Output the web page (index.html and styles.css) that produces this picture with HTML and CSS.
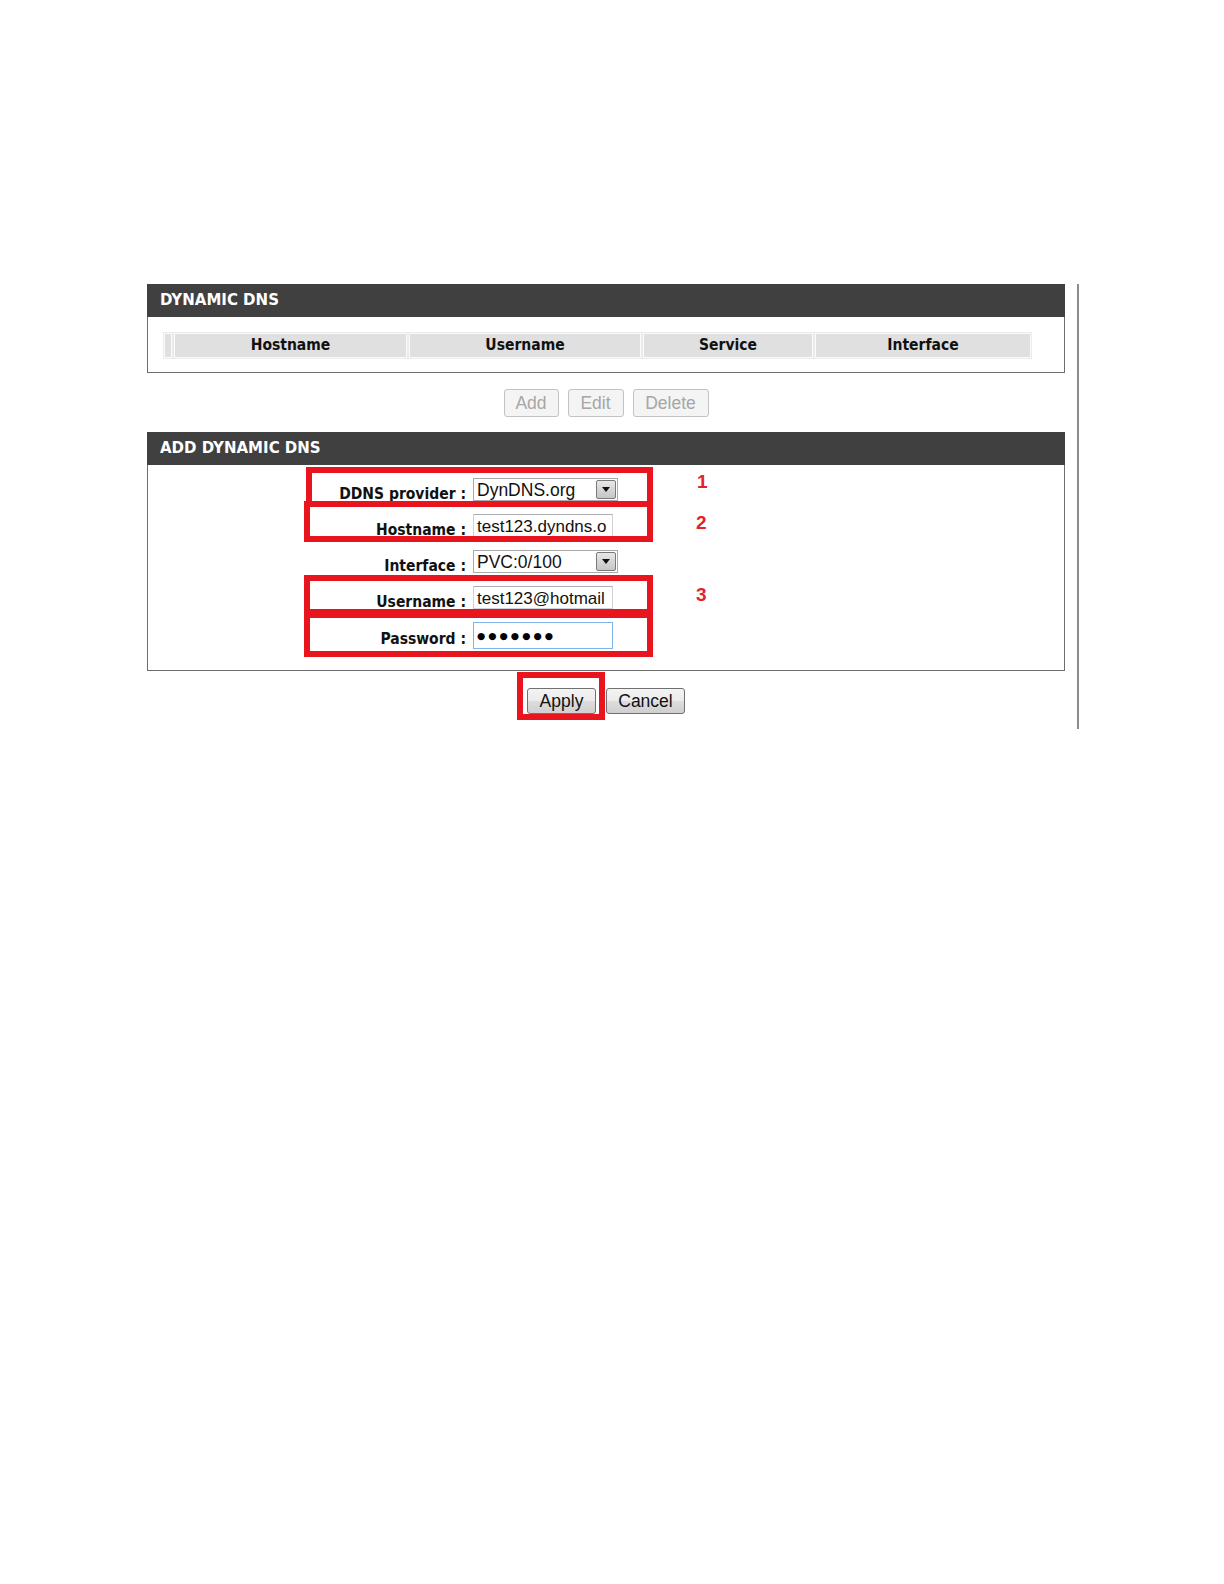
FILE: index.html
```html
<!DOCTYPE html>
<html lang="en">
<head>
<meta charset="utf-8">
<title>Dynamic DNS</title>
<link rel="stylesheet" href="styles.css">
</head>
<body>
<div class="frame">
  <section class="panel">
    <div class="panel-head">DYNAMIC DNS</div>
    <div class="list-body">
      <div class="thead">
        <div class="th th-sel"></div>
        <div class="th th-host">Hostname</div>
        <div class="th th-user">Username</div>
        <div class="th th-svc">Service</div>
        <div class="th th-if">Interface</div>
      </div>
    </div>
  </section>

  <div class="btnrow btnrow-top">
    <div class="btn disabled btn-add">Add</div>
    <div class="btn disabled btn-edit">Edit</div>
    <div class="btn disabled btn-delete">Delete</div>
  </div>

  <section class="panel panel-form">
    <div class="panel-head">ADD DYNAMIC DNS</div>
    <div class="form">
      <div class="row">
        <div class="label">DDNS provider :</div>
        <div class="select"><span class="select-text">DynDNS.org</span><span class="select-btn"><span class="tri"></span></span></div>
      </div>
      <div class="row">
        <div class="label">Hostname :</div>
        <div class="input"><span class="input-text">test123.dyndns.o</span></div>
      </div>
      <div class="row">
        <div class="label">Interface :</div>
        <div class="select"><span class="select-text">PVC:0/100</span><span class="select-btn"><span class="tri"></span></span></div>
      </div>
      <div class="row">
        <div class="label">Username :</div>
        <div class="input"><span class="input-text">test123@hotmail</span></div>
      </div>
      <div class="row row-pass">
        <div class="label">Password :</div>
        <div class="input input-focus"><span class="dots">●●●●●●●</span></div>
      </div>
    </div>
  </section>

  <div class="btnrow btnrow-bottom">
    <div class="btn btn-apply">Apply</div>
    <div class="btn btn-cancel">Cancel</div>
  </div>

  <div class="mark mark-1"></div>
  <div class="mark mark-2"></div>
  <div class="mark mark-3a"></div>
  <div class="mark mark-3b"></div>
  <div class="mark mark-apply"></div>
  <div class="num num-1">1</div>
  <div class="num num-2">2</div>
  <div class="num num-3">3</div>
</div>
</body>
</html>
```

FILE: styles.css
```css
html, body {
  margin: 0;
  padding: 0;
  background: #ffffff;
}

body {
  font-family: "Liberation Sans", Arial, sans-serif;
  color: #000;
}

.frame {
  position: relative;
  width: 930px;
  margin: 284px 0 0 147px;
  border-right: 2px solid #8c8c8c;
  padding-bottom: 15px;
}

.panel {
  width: 916px;
  border: 1px solid #6e6e6e;
  border-top: 0;
}

.panel-head {
  margin: 0 -1px;
  height: 33px;
  line-height: 33px;
  padding-left: 13px;
  background: #404040;
  color: #ffffff;
  font-family: "DejaVu Sans", sans-serif;
  font-weight: bold;
  font-size: 15px;
}

.list-body {
  padding: 15px 0 13px 15px;
}

.thead {
  display: flex;
  gap: 2px;
  width: 869px;
  height: 27px;
  box-sizing: border-box;
  padding: 1px;
  background: #ebebeb;
}

.th {
  box-sizing: border-box;
  height: 25px;
  background: #e0e0e0;
  border: 1px solid #fafafa;
  text-align: center;
  line-height: 23px;
  font-family: "DejaVu Sans Condensed", "DejaVu Sans", sans-serif;
  font-stretch: semi-condensed;
  font-weight: bold;
  font-size: 15.5px;
  color: #111;
}

.th-sel { width: 8px; }
.th-host { width: 233px; }
.th-user { width: 232px; }
.th-svc { width: 170px; }
.th-if { width: 216px; }

.btnrow {
  display: flex;
  justify-content: center;
  width: 918px;
}

.btnrow-top {
  gap: 9px;
  margin-top: 16px;
}

.btnrow-bottom {
  gap: 10px;
  margin-top: 17px;
}

.btn {
  box-sizing: border-box;
  height: 28px;
  line-height: 26px;
  border: 1px solid #707070;
  border-radius: 3px;
  text-align: center;
  font-size: 17.5px;
  background: linear-gradient(#f3f3f3 0%, #ebebeb 48%, #dddddd 52%, #cfcfcf 100%);
  color: #111;
}

.btn.disabled {
  border-color: #c2c2c2;
  background: #f4f4f4;
  color: #a6a6a6;
}

.btn-add { width: 55px; }
.btn-edit { width: 56px; }
.btn-delete { width: 76px; }
.btn-apply { width: 69px; height: 26px; line-height: 24px; }
.btn-cancel { width: 79px; height: 26px; line-height: 24px; }

.panel-form {
  margin-top: 15px;
}

.form {
  display: flex;
  flex-direction: column;
  gap: 13px;
  padding: 13px 0 21px;
}

.row {
  display: grid;
  grid-template-columns: 318px auto;
  column-gap: 7px;
  align-items: end;
  height: 23px;
}

.row-pass {
  height: 27px;
}

.label {
  text-align: right;
  line-height: 18px;
  margin-bottom: -2px;
  font-family: "DejaVu Sans Condensed", "DejaVu Sans", sans-serif;
  font-stretch: semi-condensed;
  font-weight: bold;
  font-size: 15.5px;
  color: #111;
  white-space: nowrap;
}

.row-pass .label {
  margin-bottom: 1px;
}

.select {
  position: relative;
  box-sizing: border-box;
  width: 145px;
  height: 23px;
  border: 1px solid #a9a9a9;
  background: #fff;
  overflow: hidden;
}

.select-text,
.input-text {
  display: block;
  padding-left: 3px;
  line-height: 23px;
  font-size: 17px;
  white-space: nowrap;
  color: #111;
}

.select-text {
  font-size: 17.5px;
}

.select-btn {
  position: absolute;
  right: 1px;
  top: 1px;
  box-sizing: border-box;
  width: 20px;
  height: 19px;
  border: 1px solid #7a7a7a;
  border-radius: 2px;
  background: linear-gradient(#e8e8e8 0%, #d6d6d6 50%, #c6c6c6 100%);
  display: flex;
  align-items: center;
  justify-content: center;
}

.tri {
  width: 0;
  height: 0;
  border-left: 4px solid transparent;
  border-right: 4px solid transparent;
  border-top: 5px solid #111;
}

.input {
  box-sizing: border-box;
  width: 140px;
  height: 23px;
  border: 1px solid #cfd3d8;
  border-top-color: #abadb3;
  background: #fff;
  overflow: hidden;
}

.input-focus {
  height: 27px;
  border: 1px solid #7eb4ea;
}

.dots {
  display: block;
  padding-left: 3px;
  line-height: 25px;
  font-family: "DejaVu Sans", sans-serif;
  font-size: 9.5px;
  letter-spacing: 3px;
  color: #000;
  white-space: nowrap;
}

.mark {
  position: absolute;
  box-sizing: border-box;
  border: 6px solid #e8151f;
}

.mark-1 { left: 159px; top: 183px; width: 347px; height: 40px; }
.mark-2 { left: 157px; top: 217px; width: 349px; height: 41px; }
.mark-3a { left: 157px; top: 291px; width: 349px; height: 40px; }
.mark-3b { left: 157px; top: 328px; width: 349px; height: 45px; }
.mark-apply { left: 370px; top: 388px; width: 88px; height: 48px; }

.num {
  position: absolute;
  left: 549px;
  font-size: 19px;
  font-weight: bold;
  line-height: 20px;
  color: #e4222c;
}

.num-1 { top: 188px; left: 550px; }
.num-2 { top: 229px; }
.num-3 { top: 301px; }
```
